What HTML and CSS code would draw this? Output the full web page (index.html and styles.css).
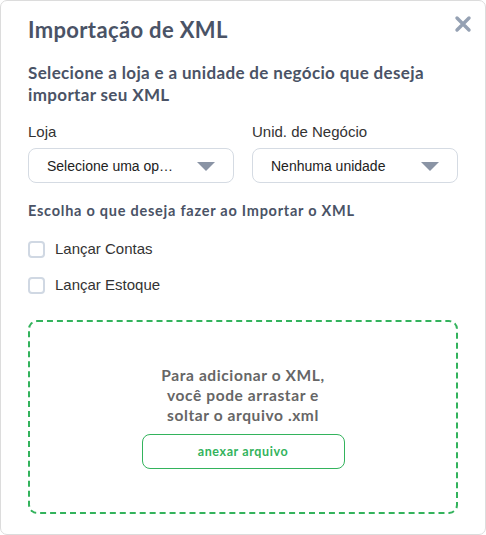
FILE: index.html
```html
<!DOCTYPE html>
<html>
<head lang="pt">
	<meta charset="UTF-8">
	<title>Importação de XML</title>
	<link rel="stylesheet" href="styles.css">
</head>
<body>
<div class="modal">
	<div class="head">
		<h1>Importação de XML</h1>
		<svg class="close" width="18" height="18" viewBox="0 0 18 18">
			<path d="M3 3L15 15M15 3L3 15" stroke="#95a1b3" stroke-width="3.4" stroke-linecap="round"/>
		</svg>
	</div>
	<h2>Selecione a loja e a unidade de negócio que deseja importar seu XML</h2>
	<div class="fields">
		<div class="field">
			<label>Loja</label>
			<div class="select">
				<span>Selecione uma op…</span>
				<i class="arrow"></i>
			</div>
		</div>
		<div class="field">
			<label>Unid. de Negócio</label>
			<div class="select">
				<span>Nenhuma unidade</span>
				<i class="arrow"></i>
			</div>
		</div>
	</div>
	<h3>Escolha o que deseja fazer ao Importar o XML</h3>
	<div class="checks">
		<label class="check"><i class="box"></i>Lançar Contas</label>
		<label class="check"><i class="box"></i>Lançar Estoque</label>
	</div>
	<div class="drop">
		<p>Para adicionar o XML,<br>você pode arrastar e<br>soltar o arquivo .xml</p>
		<div class="btn">anexar arquivo</div>
	</div>
</div>
</body>
</html>
```

FILE: styles.css
```css
*{
	margin:0;
	padding:0;
	box-sizing:border-box;
}
body{
	background:#fff;
	font-family:"Liberation Sans", Arial, sans-serif;
}
.modal{
	width:486px;
	height:535px;
	border:1px solid #dcdcdc;
	border-radius:7px;
	padding:14px 27px 0 27px;
	background:#fff;
}
.head{
	display:flex;
	justify-content:space-between;
	align-items:flex-start;
}
h1{
	font-family:Lato, sans-serif;
	font-size:22px;
	font-weight:700;
	color:#4a5366;
	line-height:30px;
	letter-spacing:0.35px;
}
.close{
	margin-right:-14px;
}
h2{
	font-family:Lato, sans-serif;
	font-size:17px;
	font-weight:700;
	color:#4a5366;
	line-height:22px;
	letter-spacing:0.35px;
	margin-top:17px;
}
.fields{
	display:flex;
	gap:18px;
	margin-top:17px;
}
.field{
	flex:1;
	display:flex;
	flex-direction:column;
}
.field label{
	font-size:15px;
	color:#333;
	line-height:18px;
	margin-bottom:7px;
}
.select{
	height:35px;
	border:1px solid #d5dbe3;
	border-radius:8px;
	display:flex;
	align-items:center;
	justify-content:space-between;
	padding:0 18px 0 18px;
	font-size:14px;
	color:#222;
}
.arrow{
	width:0;
	height:0;
	border-left:9px solid transparent;
	border-right:9px solid transparent;
	border-top:9px solid #8a94a5;
	margin-top:2px;
}
h3{
	font-family:Lato, sans-serif;
	font-size:14.5px;
	font-weight:700;
	color:#4a5366;
	line-height:18px;
	letter-spacing:0.75px;
	margin-top:19px;
}
.checks{
	display:flex;
	flex-direction:column;
	gap:18px;
	margin-top:20px;
}
.check{
	display:flex;
	align-items:center;
	font-size:15px;
	color:#333;
	line-height:18px;
}
.box{
	width:17px;
	height:17px;
	border:2px solid #d0d8e3;
	border-radius:4px;
	margin-right:10px;
}
.drop{
	margin-top:26px;
	height:194px;
	border:2px dashed #33b35c;
	border-radius:9px;
	display:flex;
	flex-direction:column;
	align-items:center;
	justify-content:center;
}
.drop p{
	font-family:Lato, sans-serif;
	font-size:15.5px;
	font-weight:700;
	color:#666;
	line-height:20px;
	letter-spacing:0.6px;
	text-align:center;
}
.btn{
	margin-top:9px;
	width:203px;
	height:35px;
	border:1px solid #33b35c;
	border-radius:8px;
	display:flex;
	align-items:center;
	justify-content:center;
	font-family:Lato, sans-serif;
	font-size:12.5px;
	font-weight:700;
	color:#33b35c;
	letter-spacing:0.6px;
}
```
